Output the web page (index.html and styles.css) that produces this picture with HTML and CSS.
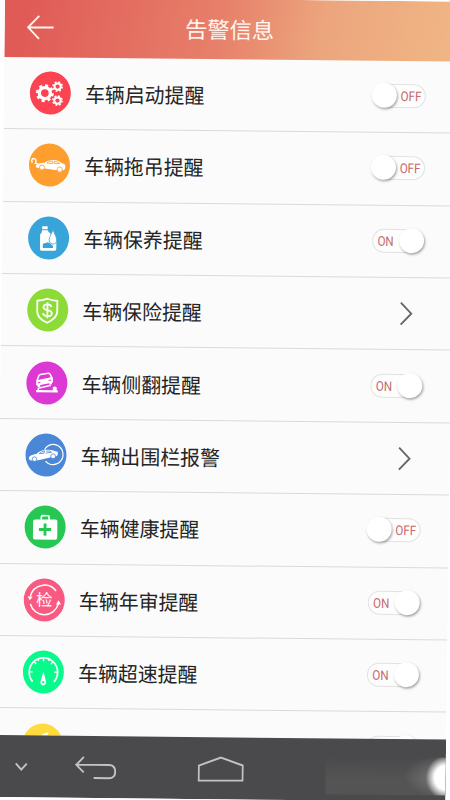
FILE: index.html
```html
<!DOCTYPE html>
<html lang="zh-CN">
<head>
<meta charset="utf-8">
<title>告警信息</title>
<link rel="stylesheet" href="styles.css">
</head>
<body>
<div class="screen">
  <header class="header">
    <svg class="header-back" viewBox="0 0 28 26"><path d="M27 13H2M12.5 1.5L1.5 13L12.5 24.5"/></svg>
    <h1 class="title">告警信息</h1>
  </header>
  <main class="list">
    <div class="row">
      <svg class="icon red" viewBox="0 0 41 43">
        <g class="line"><circle cx="15" cy="21.7" r="5.5" stroke-width="3.4"/><circle cx="15" cy="21.7" r="7.6" stroke-width="2.8" stroke-dasharray="2.98 2.98"/>
        <circle cx="27.7" cy="15" r="3.1" stroke-width="1.9"/><circle cx="27.7" cy="15" r="4.5" stroke-width="1.8" stroke-dasharray="1.77 1.77"/>
        <circle cx="27.7" cy="29" r="3.1" stroke-width="1.9"/><circle cx="27.7" cy="29" r="4.5" stroke-width="1.8" stroke-dasharray="1.77 1.77"/></g>
      </svg>
      <span class="label">车辆启动提醒</span>
      <span class="toggle off"><span class="state">OFF</span><span class="knob"></span></span>
    </div>
    <div class="row">
      <svg class="icon orange" viewBox="0 0 41 43">
        <path class="line" stroke-width="1.4" d="M3.3 19.5C1.7 16.5 3.5 14.8 5.2 15.3C7.3 15.8 7.5 18.2 6.3 20L9 20.6"/>
        <path class="solid" d="M7 22C8.5 19.7 12 19.3 15.5 19.2C19 16.8 22 16.1 26 16.5C29 16.9 31 18.6 33 19.6C35.5 20 36.8 21 36.3 24C36 26 35 26.4 33 26.7L25.5 26.4L13 24.6C10 25 7.5 24.6 6.6 23.2Z"/>
        <path class="cut" stroke-width=".8" d="M17.8 19.5C20 17.9 22 17.5 23.6 17.6L24 20L17.8 19.6M25 17.6C28 17.8 29.5 19 30.8 20L25.4 20Z"/>
        <g class="solid ringed"><circle cx="13" cy="24" r="2.5"/><circle cx="30.7" cy="26" r="2.6"/></g>
      </svg>
      <span class="label">车辆拖吊提醒</span>
      <span class="toggle off"><span class="state">OFF</span><span class="knob"></span></span>
    </div>
    <div class="row">
      <svg class="icon blue" viewBox="0 0 41 43">
        <path class="solid" d="M14 9.8H19.4V12.8H14ZM13.8 13.7H19.5C20.5 16 22 16.5 23.5 18V25H28.3V32.5Q28.3 34.2 26.7 34.2H13.5Q12 34.2 12 32.5V18.5Q12 17.5 13 16.7Q13.8 16 13.8 13.7Z"/>
        <path class="hole" d="M14.8 27.2L20 25.7L25 29.2V31.5H14.8Z"/>
        <path class="solid ringed" d="M24.8 12.8C26 17 28.6 20.4 28.6 23.5A3.8 4 0 0 1 21 23.5C21 20.4 23.7 17 24.8 12.8Z"/>
      </svg>
      <span class="label">车辆保养提醒</span>
      <span class="toggle on"><span class="state">ON</span><span class="knob"></span></span>
    </div>
    <div class="row">
      <svg class="icon lime" viewBox="0 0 41 43">
        <path class="line" stroke-width="1.8" d="M20 10.2Q25 12.2 30 12.2V23C30 29 25 32 20 34.2C15 32 10 29 10 23V12.2Q15 12.2 20 10.2Z"/>
        <path class="line" stroke-width="1.8" d="M24.2 18.4C23.6 16.6 22.2 15.9 20.2 15.9C17.8 15.9 16.2 17 16.2 18.7C16.2 22.8 24.6 20.2 24.6 24.6C24.6 26.6 22.8 27.7 20.3 27.7C17.8 27.7 16.2 26.6 15.8 24.7M20.2 13.7V29.8"/>
      </svg>
      <span class="label">车辆保险提醒</span>
      <svg class="chevron" viewBox="0 0 14 25"><path d="M1.5 1.5L12 12.5L1.5 23.5"/></svg>
    </div>
    <div class="row">
      <svg class="icon magenta" viewBox="0 0 41 43">
        <path class="line" stroke-width="1.5" d="M10.5 19.5L12.3 14.5Q12.8 13.4 14 13.1L21.8 11.8Q23 11.7 23.5 12.6L25.8 16.7"/>
        <path class="solid" d="M9.8 19.8Q10 18.7 11.3 18.5L24.8 15.8Q26.2 15.8 26.5 17L26.7 20.7L25.5 21.2V22.7L23 23.2V21.7L14 23.6V25.2L11.3 25.8V24.2L9.8 23.8Z"/>
        <path class="cut" stroke-width="1" d="M11.6 21.4L14 20.9M22.3 19L24.8 18.4"/>
        <path class="line" stroke-width="1.5" d="M12 29.5V26.8L24.5 23.6"/>
        <path class="solid" d="M9.8 28.6H26.5V25.8Q28.7 23.8 30.4 25.8V28.6H31.5V30.8H9.8Z"/>
      </svg>
      <span class="label">车辆侧翻提醒</span>
      <span class="toggle on"><span class="state">ON</span><span class="knob"></span></span>
    </div>
    <div class="row">
      <svg class="icon azure" viewBox="0 0 41 43">
        <path class="line" stroke-width="1.2" d="M19 16.2A9.8 10.2 0 1 1 20.2 27.5"/>
        <path class="solid" d="M3.4 24.3Q4.5 21.4 11.2 20.3C15 17 18 16.3 23 16.3C26 16.3 28 17 30 17.6L32.2 18.2Q32.8 20.4 31.5 22.5L26.7 23.4L14 26.6Q8 28.3 4 26.7Z"/>
        <path class="cut" stroke-width=".8" d="M13.7 20.2Q15.8 18 19 17.5L18.5 19.8ZM20.6 17.5Q24.3 17.1 26 18.6L20.3 19.6"/>
        <g class="solid ringed"><circle cx="9" cy="25.8" r="2.3"/><circle cx="27.6" cy="22.7" r="2.4"/></g>
      </svg>
      <span class="label">车辆出围栏报警</span>
      <svg class="chevron" viewBox="0 0 14 25"><path d="M1.5 1.5L12 12.5L1.5 23.5"/></svg>
    </div>
    <div class="row">
      <svg class="icon green" viewBox="0 0 41 43">
        <rect class="solid" x="8.4" y="14" width="24.3" height="20.2" rx="2"/>
        <path class="line" stroke-width="1.7" d="M16.6 14.5V11.2Q16.6 10.2 17.6 10.2H23.3Q24.3 10.2 24.3 11.2V14.5"/>
        <path class="cut" stroke-width="2.9" d="M20.4 17.9V30.1M14.3 24H26.5"/>
      </svg>
      <span class="label">车辆健康提醒</span>
      <span class="toggle off"><span class="state">OFF</span><span class="knob"></span></span>
    </div>
    <div class="row">
      <svg class="icon pink" viewBox="0 0 41 43">
        <path class="line" stroke-width="1.5" d="M6.5 18A14.6 15 0 0 1 32.2 12.4M34.7 25A14.6 15 0 0 1 6.6 25.5"/>
        <path class="solid" d="M3.8 18L8.9 18.3L6 22ZM32.2 25.8L34.8 21.6L37.3 25.7Z"/>
        <text class="badge-text" x="20.5" y="27.3">检</text>
      </svg>
      <span class="label">车辆年审提醒</span>
      <span class="toggle on"><span class="state">ON</span><span class="knob"></span></span>
    </div>
    <div class="row">
      <svg class="icon mint" viewBox="0 0 41 43">
        <path class="line" stroke-width="1.7" d="M9.8 31.2A14.2 14.4 0 1 1 31.2 31.2"/>
        <path class="line" stroke-width="1.3" d="M20.5 7.5V11M11 11L13.2 13.7M30 11L27.8 13.7M6.5 21.5H9.8M34.5 21.5H31.2M14.8 8.5L15.5 10.5M26.2 8.5L25.5 10.5"/>
        <path class="solid" d="M20.5 21L23.3 31.2A2.9 3 0 1 1 17.7 31.2Z"/><circle class="hole" cx="20.5" cy="31.7" r="1.1"/>
      </svg>
      <span class="label">车辆超速提醒</span>
      <span class="toggle on"><span class="state">ON</span><span class="knob"></span></span>
    </div>
    <div class="row">
      <svg class="icon yellow" viewBox="0 0 41 43"><path class="solid" d="M18.5 14Q19 10 26.5 9L24 14Z"/></svg>
      <span class="label"></span>
      <span class="toggle on"><span class="knob"></span></span>
    </div>
  </main>
  <nav class="navbar">
    <svg class="nav-down" viewBox="0 0 13 9"><path d="M1 1.2L6.5 7.3L12 1.2"/></svg>
    <svg class="nav-back" viewBox="0 0 42 24"><path d="M9 1L1.5 9L9 16.5M2 8.8H34Q40.5 8.8 40.5 15.4Q40.5 22 34 22H19"/></svg>
    <svg class="nav-home" viewBox="0 0 46 26"><path d="M1 24.5V9.5L23 1.3L45 9V24Z"/></svg>
    <div class="glow"></div>
  </nav>
</div>
</body>
</html>
```
FILE: styles.css
```css
* { box-sizing: border-box; }

html, body {
  margin: 0;
  height: 100%;
  overflow: hidden;
  background: #fff;
}

body {
  font-family: "Noto Sans CJK SC", "Noto Sans", sans-serif;
}

.screen {
  width: 450px;
  height: 800px;
  display: flex;
  flex-direction: column;
  overflow: hidden;
  background: #fbfbfb;
  transform: matrix(1, 0.01, -0.012, 1, 0.2, -0.7);
}

svg { display: block; flex: none; }

.header {
  flex: none;
  height: 59.8px;
  display: grid;
  grid-template-columns: 50px 1fr 50px;
  align-items: center;
  background: linear-gradient(100deg, #e05a56 4%, #e7806a 48%, #eca57d 70%, #f0b584 98%);
}

.header-back {
  width: 28px;
  height: 26px;
  margin-left: 22px;
  fill: none;
  stroke: #fff3ee;
  stroke-width: 1.9;
}

.title {
  margin: -2px 0 0;
  text-align: center;
  color: #fff6f1;
  font-size: 22.3px;
  font-weight: 400;
  line-height: 32px;
}

.list {
  flex: 1;
  min-height: 0;
  overflow: hidden;
}

.row {
  height: 72.4px;
  display: flex;
  align-items: center;
  padding: 0 28px 0 25.7px;
  border-bottom: 1.3px solid #dadada;
}

.icon {
  width: 41px;
  height: 43px;
  border-radius: 50%;
  background: var(--tone);
}

.red { --tone: #fc4352; }
.orange { --tone: #fe9e2e; }
.blue { --tone: #37a5da; }
.lime { --tone: #8ddb37; }
.magenta { --tone: #dc38d3; }
.azure { --tone: #4b87d7; }
.green { --tone: #27c754; }
.pink { --tone: #f95a82; }
.mint { --tone: #08fa8d; }
.yellow { --tone: #ffdb40; }

.solid { fill: #fff; }
.line { fill: none; stroke: #fff; }
.cut { fill: none; stroke: var(--tone); }
.hole { fill: var(--tone); }
.ringed { stroke: var(--tone); stroke-width: .8; }
.badge-text { fill: #fff; font-size: 16.5px; text-anchor: middle; }

.label {
  flex: 1;
  margin: 1px 0 0 14.5px;
  color: #242424;
  font-size: 19.9px;
  line-height: 30px;
  transform: scaleY(1.04);
}

.toggle {
  position: relative;
  width: 52.5px;
  height: 24px;
  display: flex;
  align-items: center;
  margin-bottom: 1px;
  border: 1px solid #e2e2e2;
  border-radius: 12px;
  background: #fdfdfd;
}

.toggle.off { justify-content: flex-end; padding-right: 2px; }
.toggle.on { padding-left: 3px; }

.state {
  color: #c46a6b;
  font: 13.5px/22px Roboto, sans-serif;
  transform: scaleX(.86);
}

.knob {
  position: absolute;
  top: -2px;
  width: 25px;
  height: 25px;
  border-radius: 50%;
  background: #fff;
  box-shadow: 1px 1.5px 2.5px rgba(0, 0, 0, .35);
}

.off .knob { left: -2.5px; }
.on .knob { right: -1px; }

.chevron {
  width: 14px;
  height: 25px;
  margin-right: 10px;
  fill: none;
  stroke: #66676a;
  stroke-width: 1.9;
}

.navbar {
  position: relative;
  flex: none;
  height: 62.3px;
  display: flex;
  align-items: center;
  padding: 3px 0 0 18.5px;
  background: #4a4a4c;
  fill: none;
  stroke: #c3c3c3;
  stroke-width: 1.9;
}

.nav-down { width: 13px; height: 9px; margin-bottom: 2px; }
.nav-back { width: 42px; height: 24px; margin-left: 47px; }
.nav-home { width: 46px; height: 26px; margin-left: 81px; }

.glow {
  position: absolute;
  right: 0;
  top: 18px;
  width: 120px;
  height: 38px;
  background:
    radial-gradient(ellipse 20px 22px at 100% 53%, #fff 0 55%, rgba(255, 255, 255, 0) 100%),
    radial-gradient(ellipse 42px 22px at 100% 50%, rgba(255, 255, 255, .25), rgba(255, 255, 255, 0)),
    linear-gradient(180deg, rgba(84, 84, 84, 0), #545454 60%);
}
```
